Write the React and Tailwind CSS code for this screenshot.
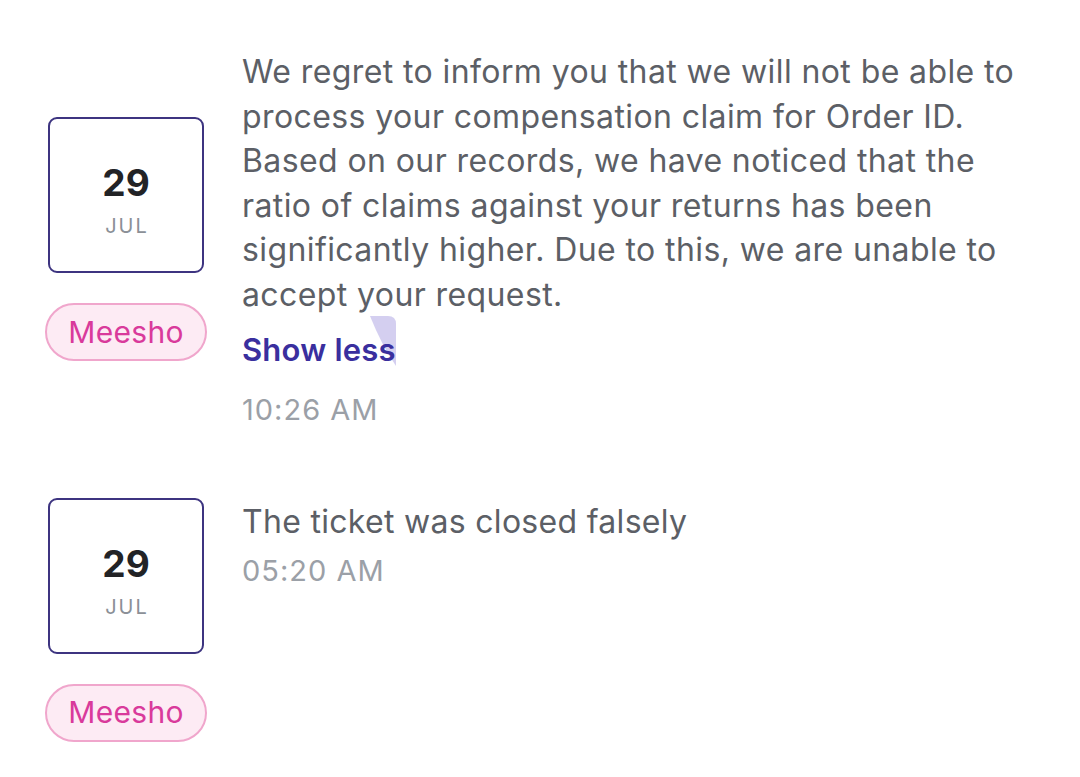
import React from 'react';

const lines = [
  'We regret to inform you that we will not be able to',
  'process your compensation claim for Order ID.',
  'Based on our records, we have noticed that the',
  'ratio of claims against your returns has been',
  'significantly higher. Due to this, we are unable to',
  'accept your request.',
];

const DateBadge = () => (
  <div className="flex w-[162px] flex-col items-center">
    <div className="flex h-[156px] w-[156px] flex-col items-center rounded-[9px] border-2 border-[#3d3480] bg-white">
      <div className="mt-[42px] text-[37px] font-bold leading-[44px] text-[#222326]">29</div>
      <div className="mt-[-1px] pl-[2px] text-[20px] leading-[44px] tracking-[2px] text-[#8b9097]">JUL</div>
    </div>
    <div className="mt-[30px] flex h-[58px] w-[162px] items-center justify-center rounded-full border-2 border-[#f0a6cc] bg-[#fdebf4] text-[30px] tracking-[0.3px] text-[#d93a9b]">
      Meesho
    </div>
  </div>
);

export default function App() {
  return (
    <div className="min-h-[777px] bg-white pl-[45px] pt-[50px] font-['Inter',sans-serif]">
      {/* ticket reply 1 */}
      <div className="flex items-start gap-[35px]">
        <div className="mt-[67px]">
          <DateBadge />
        </div>
        <div className="flex flex-col">
          <p className="text-[32px] leading-[44.6px] tracking-[0.4px] text-[#5c5f66]">
            {lines.map((l, i) => (
              <span key={i} className="block whitespace-nowrap">{l}</span>
            ))}
          </p>
          <div className="relative mt-[10px] h-[44px] w-fit">
            {/* tap highlight behind the link */}
            <svg className="absolute left-[128px] top-[-12px]" width="28" height="52" viewBox="0 0 28 52">
              <path d="M0 0 H18 Q26 0 26 8 V50 Q12 30 0 0 Z" fill="#c9c3ec" fillOpacity="0.8" />
            </svg>
            <span className="relative text-[31px] font-semibold leading-[44px] tracking-[0.2px] text-[#3a2f9e]">Show less</span>
          </div>
          <div className="mt-[18px] text-[29px] leading-[40px] tracking-[1px] text-[#9ba0a7]">10:26 AM</div>
        </div>
      </div>

      {/* ticket reply 2 */}
      <div className="mt-[68px] flex items-start gap-[35px]">
        <DateBadge />
        <div className="mt-[2px] flex flex-col">
          <p className="text-[32px] leading-[44.6px] tracking-[0.3px] text-[#5c5f66]">The ticket was closed falsely</p>
          <div className="mt-[7px] text-[29px] leading-[40px] tracking-[1px] text-[#9ba0a7]">05:20 AM</div>
        </div>
      </div>
    </div>
  );
}
